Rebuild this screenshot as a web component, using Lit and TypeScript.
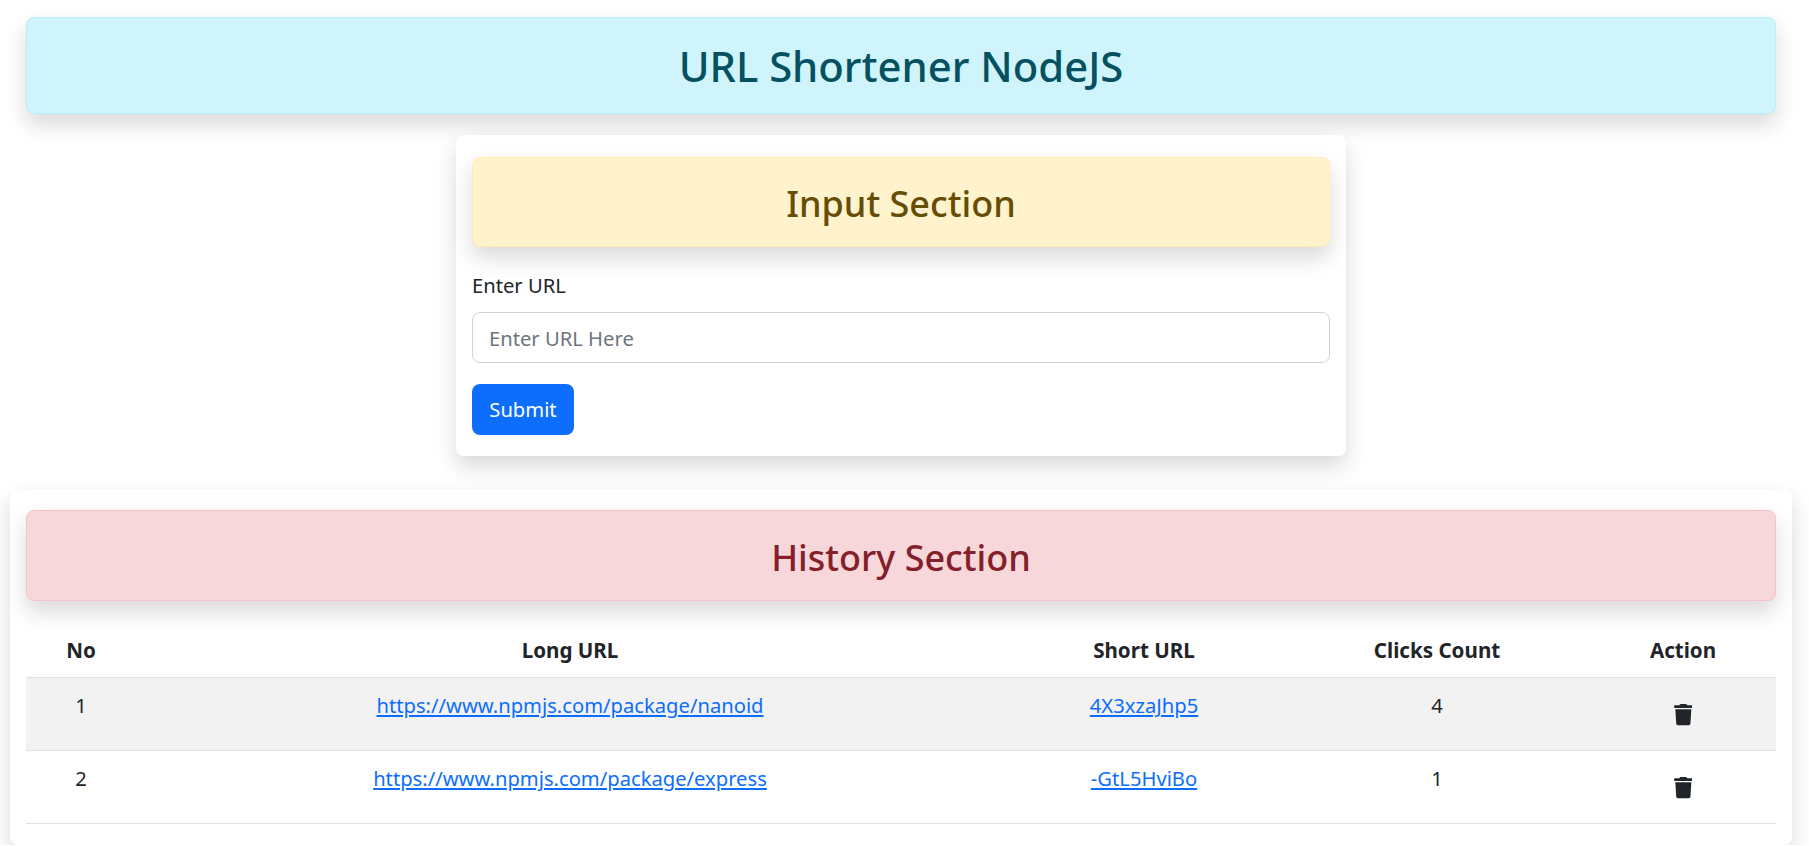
import {LitElement, html, css} from 'lit';
import {customElement, state} from 'lit/decorators.js';

interface UrlRow {
    no: number;
    longUrl: string;
    shortUrl: string;
    clicks: number;
}

@customElement('app-root')
export class AppRoot extends LitElement {

    @state() rows: UrlRow[] = [
        {no: 1, longUrl: 'https://www.npmjs.com/package/nanoid', shortUrl: '4X3xzaJhp5', clicks: 4},
        {no: 2, longUrl: 'https://www.npmjs.com/package/express', shortUrl: '-GtL5HviBo', clicks: 1},
    ];

    static override styles = css`
    :host {
      display: block;
      box-sizing: border-box;
      padding: 17px 7px 0 0;
      font-family: "Noto Sans", "Open Sans", sans-serif;
      font-size: 20.2px;
      line-height: 32px;
      color: #212529;
      background: #fff;
    }

    * {
      box-sizing: border-box;
    }

    .alert {
      padding: 21.65px;
      border: 1px solid transparent;
      border-radius: 8px;
      text-align: center;
      box-shadow: 0 10.67px 21.33px rgba(0, 0, 0, 0.15);
    }

    .alert h2, .alert h3 {
      margin: 0;
      font-weight: 500;
    }

    .alert h2 {
      font-size: 41.8px;
      line-height: 51.7px;
    }

    .alert h3 {
      padding-top: 5px;
      font-size: 36px;
      line-height: 39.8px;
    }

    .info {
      background: #cff4fc;
      border-color: #b6effb;
      color: #055160;
    }

    .warning {
      background: #fff3cd;
      border-color: #ffecb5;
      color: #664d03;
    }

    .danger {
      background: #f8d7da;
      border-color: #f5c2c7;
      color: #842029;
    }

    .danger h3 {
      padding-bottom: 1px;
    }

    .page-title {
      margin: 0 26px 21.5px;
    }

    .card {
      padding: 21.33px 16px;
      background: #fff;
      border-radius: 8px;
      box-shadow: 0 10.67px 21.33px rgba(0, 0, 0, 0.15);
    }

    .input-card {
      width: 890px;
      margin: 0 auto 33px;
      padding-bottom: 20.73px;
    }

    .history-card {
      margin: 0 10px;
    }

    .input-card .alert {
      margin-bottom: 21.33px;
    }

    .history-card .alert {
      margin-bottom: 22px;
    }

    label {
      display: block;
      padding-top: 1px;
      margin-bottom: 10.67px;
    }

    input {
      display: block;
      width: 100%;
      height: 51px;
      margin-bottom: 21.33px;
      padding: 11.67px 16px 9.67px;
      border: 1.33px solid #ced4da;
      border-radius: 8px;
      font: inherit;
      color: #212529;
      background: #fff;
    }

    input::placeholder {
      color: #6c757d;
      opacity: 1;
    }

    .submit {
      display: block;
      width: 102px;
      height: 51px;
      padding: 0 0 1px;
      border: none;
      border-radius: 8px;
      background: #0d6efd;
      color: #fff;
      font: inherit;
    }

    table {
      width: 100%;
      table-layout: fixed;
      border-collapse: collapse;
      text-align: center;
    }

    th, td {
      vertical-align: top;
      border-bottom: 1px solid #dee2e6;
    }

    th {
      padding: 10.83px;
      font-size: 20.6px;
      font-weight: 700;
    }

    td {
      padding: 11.5px 10.83px 9.5px;
    }

    tbody tr:nth-child(odd) td {
      background: #f2f2f2;
    }

    a {
      color: #0d6efd;
    }

    .col-no { width: 110px; }
    .col-long { width: 868px; }
    .col-short { width: 280px; }
    .col-clicks { width: 306px; }
    .col-action { width: 186px; }

    .delete {
      display: inline-flex;
      align-items: center;
      justify-content: center;
      height: 51px;
      width: 51px;
      padding: 0;
      border: none;
      background: none;
      vertical-align: top;
    }

    .delete svg {
      width: 18.67px;
      height: 21.33px;
      fill: #212529;
    }
  `;

    private renderRow(row: UrlRow) {
        return html`
      <tr>
        <td>${row.no}</td>
        <td><a href="#">${row.longUrl}</a></td>
        <td><a href="#">${row.shortUrl}</a></td>
        <td>${row.clicks}</td>
        <td>
          <button class="delete" aria-label="Delete">
            <svg viewBox="0 0 448 512"><path d="M135.2 17.7L128 32H32C14.3 32 0 46.3 0 64S14.3 96 32 96H416c17.7 0 32-14.3 32-32s-14.3-32-32-32H320l-7.2-14.3C307.4 6.8 296.3 0 284.2 0H163.8c-12.1 0-23.2 6.8-28.6 17.7zM416 128H32L53.2 467c1.6 25.3 22.6 45 47.9 45H346.9c25.3 0 46.3-19.7 47.9-45L416 128z"/></svg>
          </button>
        </td>
      </tr>
    `;
    }

    protected override render() {
        return html`
      <div class="alert info page-title"><h2>URL Shortener NodeJS</h2></div>

      <div class="card input-card">
        <div class="alert warning"><h3>Input Section</h3></div>
        <label for="url">Enter URL</label>
        <input id="url" type="text" placeholder="Enter URL Here"/>
        <button class="submit">Submit</button>
      </div>

      <div class="card history-card">
        <div class="alert danger"><h3>History Section</h3></div>
        <table>
          <thead>
            <tr>
              <th class="col-no">No</th>
              <th class="col-long">Long URL</th>
              <th class="col-short">Short URL</th>
              <th class="col-clicks">Clicks Count</th>
              <th class="col-action">Action</th>
            </tr>
          </thead>
          <tbody>
            ${this.rows.map((row) => this.renderRow(row))}
          </tbody>
        </table>
      </div>
    `;
    }
}

declare global {
    interface HTMLElementTagNameMap {
        'app-root': AppRoot;
    }
}
